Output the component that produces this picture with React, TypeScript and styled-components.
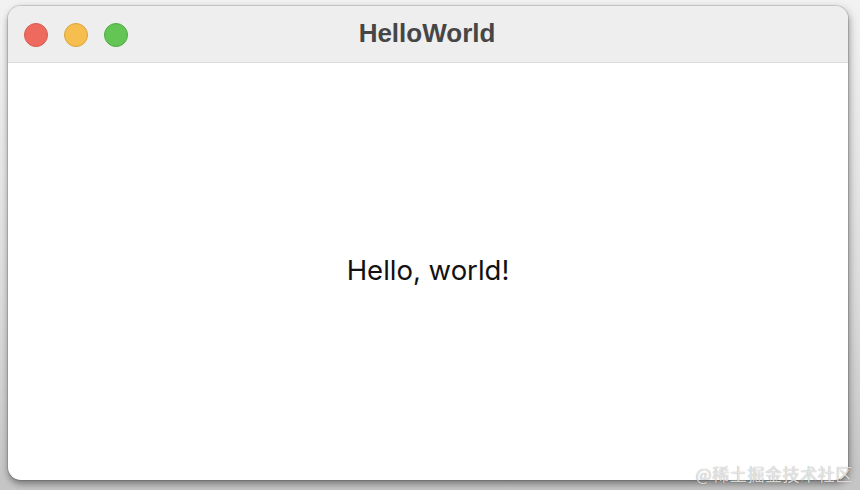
import React from "react";
import styled, { createGlobalStyle } from "styled-components";

const GlobalStyle = createGlobalStyle`
  html, body {
    margin: 0;
    padding: 0;
    background: #e6e6e6;
  }
`;

const Stage = styled.div`
  position: relative;
  width: 860px;
  height: 490px;
  box-sizing: border-box;
  padding: 6px 12px 10px 8px;
  background: linear-gradient(to bottom, #f2f2f2 0%, #dcdcdc 60%, #c4c4c4 100%);
  overflow: hidden;
`;

const Window = styled.div`
  display: flex;
  flex-direction: column;
  height: 100%;
  background: #ffffff;
  border-radius: 13px;
  overflow: hidden;
  box-shadow: 0 0 0 1px rgba(0, 0, 0, 0.12), 0 4px 6px rgba(0, 0, 0, 0.28),
    2px 2px 8px rgba(0, 0, 0, 0.2);
`;

const TitleBar = styled.div`
  position: relative;
  display: flex;
  align-items: center;
  justify-content: center;
  height: 56px;
  flex-shrink: 0;
  background: #eeeeee;
  border-bottom: 1px solid #dcdcdc;
`;

const Lights = styled.div`
  position: absolute;
  left: 16px;
  top: 17px;
  display: flex;
  gap: 16px;
`;

const Light = styled.span<{ $fill: string; $rim: string }>`
  display: block;
  width: 24px;
  height: 24px;
  border-radius: 50%;
  box-sizing: border-box;
  background: ${(p) => p.$fill};
  border: 1px solid ${(p) => p.$rim};
`;

const Title = styled.div`
  font-family: "Liberation Sans", Arial, sans-serif;
  font-weight: bold;
  font-size: 26px;
  color: #464646;
  margin-left: -2px;
  margin-top: -1px;
`;

const Content = styled.div`
  flex: 1;
  display: flex;
  align-items: center;
  justify-content: center;
  padding-bottom: 4px;
`;

const Greeting = styled.div`
  font-family: Inter, "Liberation Sans", sans-serif;
  font-size: 27.5px;
  color: #111111;
`;

const Watermark = styled.div`
  position: absolute;
  right: 7px;
  bottom: 4px;
  font-family: "Noto Sans CJK SC", sans-serif;
  font-size: 17px;
  color: rgba(250, 250, 250, 0.8);
  text-shadow: 0 0 1px rgba(0, 0, 0, 0.45);
  letter-spacing: 0.6px;
`;

export default function App(): React.JSX.Element {
  return (
    <>
      <GlobalStyle />
      <Stage>
        <Window>
          <TitleBar>
            <Lights>
              <Light $fill="#ee6a5f" $rim="#d65a50" />
              <Light $fill="#f5be4f" $rim="#d9a43c" />
              <Light $fill="#62c554" $rim="#4fab43" />
            </Lights>
            <Title>HelloWorld</Title>
          </TitleBar>
          <Content>
            <Greeting>Hello, world!</Greeting>
          </Content>
        </Window>
        <Watermark>@稀土掘金技术社区</Watermark>
      </Stage>
    </>
  );
}
